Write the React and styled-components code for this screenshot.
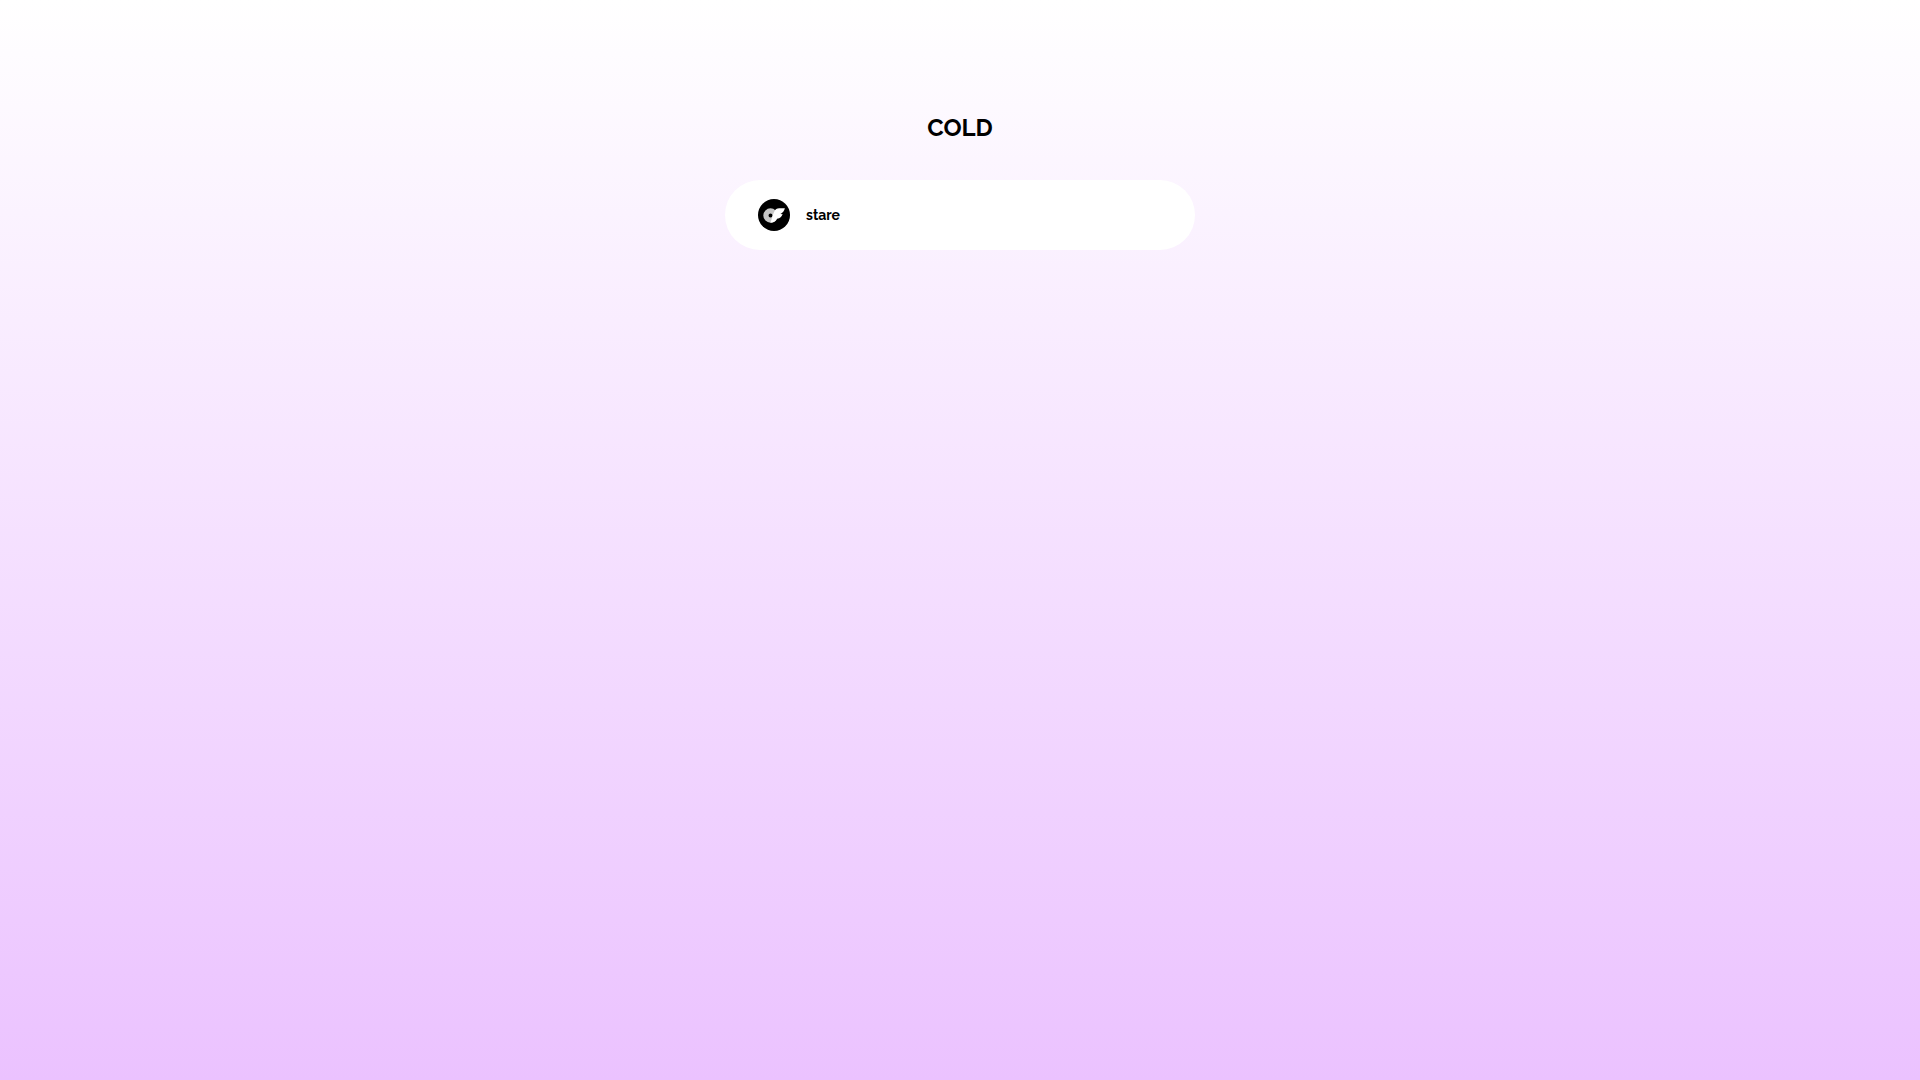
import styled, { createGlobalStyle } from 'styled-components'

const links = [
  { id: 'stare', label: 'stare', href: '#stare' }
]

export default function App() {

  return (
    <>
      <GlobalStyle />
      <Main>
        <Title>COLD</Title>
        <LinkList>
          {
            links.map(({ id, label, href }) => (
              <li key={id}>
                <LinkCard href={href}>
                  <WingLogo />
                  <span>{label}</span>
                </LinkCard>
              </li>
            ))
          }
        </LinkList>
      </Main>
    </>
  )
}

const WingLogo = () => (
  <Logo viewBox="0 0 32 32" aria-hidden="true">
    <circle cx="16" cy="16" r="16" fill="#000" />
    <g transform="translate(5.3 5.7) scale(.9)">
      <path
        fill="#c6c6c6"
        fillRule="evenodd"
        d="M8 4a8 8 0 1 0 0 16a8 8 0 0 0 0-16zM8 9.8a2.2 2.2 0 1 1 0 4.4a2.2 2.2 0 0 1 0-4.4z"
      />
      <path
        fill="#fff"
        d="M24 4h-4.015c-3.45 0-5.3.2-6.75 1.96C11.3 8.4 10.6 12.4 8 20a8 8 0 0 0 7.34-4.43c3.18-.23 5.39-2.13 6.085-5.17c0 0-1.4.285-2.43 0C21.51 9.22 23.33 6.96 24 4z"
      />
    </g>
  </Logo>
)

const GlobalStyle = createGlobalStyle`
  * {
    box-sizing: border-box;
  }

  body {
    margin: 0;
    min-height: 100vh;
    background: linear-gradient(#fff, #ebc2ff);
    color: #000;
    font-family: Raleway, Lato, sans-serif;
    font-weight: 700;
  }
`

const Main = styled.main`
  display: flex;
  flex-direction: column;
  align-items: center;
  gap: 38px;
  padding: 114px 16px 40px;
`

const Title = styled.h1`
  margin: 0;
  font-size: 24px;
  line-height: 28px;
`

const LinkList = styled.ul`
  display: flex;
  flex-direction: column;
  gap: 16px;
  width: 100%;
  max-width: 470px;
  margin: 0;
  padding: 0;
  list-style: none;
`

const LinkCard = styled.a`
  display: flex;
  align-items: center;
  gap: 16px;
  min-height: 70px;
  padding: 16px 33px;
  border-radius: 35px;
  background: #fff;
  color: inherit;
  font-size: 14px;
  line-height: 20px;
  text-decoration: none;
`

const Logo = styled.svg`
  flex: none;
  width: 32px;
  height: 32px;
`
